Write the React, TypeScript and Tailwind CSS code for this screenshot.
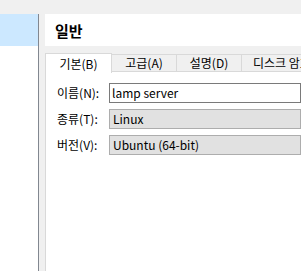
import React from "react";

const font = { fontFamily: '"Noto Sans CJK KR", "Noto Sans", sans-serif' };

export default function App() {
  return (
    <div
      className="w-[301px] h-[271px] bg-[#f0f0f0] flex flex-col overflow-hidden text-[12px] text-black"
      style={font}
    >
      <div className="h-[14px] shrink-0" />
      <div className="flex flex-1 min-h-0">
        <div className="w-[39px] shrink-0 bg-white border-r border-[#828790]">
          <div className="h-[32px] bg-[#cce8ff]" />
        </div>
        <div className="w-[6px] shrink-0" />
        <div className="flex-1 flex flex-col min-w-0">
          <div className="h-[32px] shrink-0 bg-white flex items-center pl-[10px] text-[15px] font-bold leading-none">
            일반
          </div>
          <div className="h-[7px] shrink-0" />
          <div className="h-[19px] shrink-0 flex items-end whitespace-nowrap">
            <div className="w-[67px] h-[20px] shrink-0 bg-white border-t border-l border-r border-[#d9d9d9] flex items-center justify-center leading-none relative top-[1px]">
              기본(B)
            </div>
            <div className="w-[65px] h-[18px] shrink-0 bg-[#f0f0f0] border-t border-r border-b border-[#d9d9d9] flex items-center justify-center leading-none">
              고급(A)
            </div>
            <div className="w-[65px] h-[18px] shrink-0 bg-[#f0f0f0] border-t border-r border-b border-[#d9d9d9] flex items-center justify-center leading-none">
              설명(D)
            </div>
            <div className="w-[80px] h-[18px] shrink-0 bg-[#f0f0f0] border-t border-r border-b border-[#d9d9d9] flex items-center pl-[11px] leading-none">
              디스크 암호화
            </div>
          </div>
          <div className="flex-1 bg-white border-l border-[#d9d9d9] pt-[11px] pl-[11px] flex flex-col gap-[6px]">
            <div className="flex items-center h-[20px]">
              <div className="w-[52px] shrink-0 leading-none">이름(N):</div>
              <div className="flex-1 h-[20px] border border-[#7a7a7a] bg-white flex items-center pl-[2px] leading-none">
                lamp server
              </div>
            </div>
            <div className="flex items-center h-[20px]">
              <div className="w-[52px] shrink-0 leading-none">종류(T):</div>
              <div className="flex-1 h-[20px] border border-[#adadad] bg-[#e1e1e1] flex items-center pl-[3px] leading-none">
                Linux
              </div>
            </div>
            <div className="flex items-center h-[20px]">
              <div className="w-[52px] shrink-0 leading-none">버전(V):</div>
              <div className="flex-1 h-[20px] border border-[#adadad] bg-[#e1e1e1] flex items-center pl-[3px] leading-none">
                Ubuntu (64-bit)
              </div>
            </div>
          </div>
        </div>
      </div>
    </div>
  );
}
